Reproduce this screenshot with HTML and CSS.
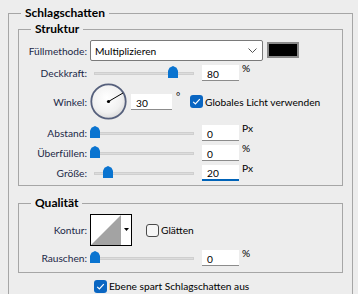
FILE: index.html
```html
<!DOCTYPE html>
<html lang="de">

<head>
    <meta charset="UTF-8">
    <title>Schlagschatten</title>
    <link rel="stylesheet" href="styles.css">
</head>

<body>
    <fieldset class="group outer">
        <legend>Schlagschatten</legend>

        <fieldset class="group inner">
            <legend>Struktur</legend>

            <div class="row row-mode">
                <label class="lbl">Füllmethode:</label>
                <div class="select">
                    <span>Multiplizieren</span>
                    <svg class="chevron" width="9" height="5" viewBox="0 0 9 5">
                        <path d="M0.5 0.5 L4.5 4.5 L8.5 0.5" fill="none" stroke="#555" stroke-width="1"/>
                    </svg>
                </div>
                <div class="swatch"></div>
            </div>

            <div class="row row-opacity">
                <label class="lbl">Deckkraft:</label>
                <div class="slider"><div class="track"></div><div class="thumb" style="left:78px"></div></div>
                <div class="num">80</div>
                <span class="unit">%</span>
            </div>

            <div class="row row-angle">
                <label class="lbl">Winkel:</label>
                <svg class="dial" width="37" height="37" viewBox="0 0 37 37">
                    <defs>
                        <radialGradient id="dialFill" cx="45%" cy="40%" r="60%">
                            <stop offset="0" stop-color="#ffffff"/>
                            <stop offset="0.7" stop-color="#f1f1f1"/>
                            <stop offset="1" stop-color="#dcdcdc"/>
                        </radialGradient>
                    </defs>
                    <circle cx="18.5" cy="18.5" r="17.2" fill="url(#dialFill)" stroke="#56607c" stroke-width="1.8"/>
                    <line x1="18.5" y1="18.5" x2="33" y2="10" stroke="#000" stroke-width="1"/>
                    <circle cx="18.5" cy="18.5" r="1.6" fill="#000"/>
                </svg>
                <div class="num num-angle">30</div>
                <span class="deg">°</span>
                <span class="check on">
                    <svg width="13" height="13" viewBox="0 0 13 13"><path d="M3.2 6.8 L5.4 9 L9.8 4.2" fill="none" stroke="#fff" stroke-width="1.2"/></svg>
                </span>
                <span class="check-text">Globales Licht verwenden</span>
            </div>

            <div class="row row-dist">
                <label class="lbl">Abstand:</label>
                <div class="slider"><div class="track"></div><div class="thumb" style="left:0px"></div></div>
                <div class="num">0</div>
                <span class="unit">Px</span>
            </div>

            <div class="row row-spread">
                <label class="lbl">Überfüllen:</label>
                <div class="slider"><div class="track"></div><div class="thumb" style="left:0px"></div></div>
                <div class="num">0</div>
                <span class="unit">%</span>
            </div>

            <div class="row row-size">
                <label class="lbl">Größe:</label>
                <div class="slider"><div class="track"></div><div class="thumb" style="left:13px"></div></div>
                <div class="num focus">20</div>
                <span class="unit">Px</span>
            </div>
        </fieldset>

        <fieldset class="group inner quality">
            <legend>Qualität</legend>

            <div class="row row-contour">
                <label class="lbl">Kontur:</label>
                <div class="contour">
                    <svg width="40" height="30" viewBox="0 0 40 30">
                        <rect x="0" y="0" width="40" height="30" fill="#fff"/>
                        <polygon points="0,30 30,0 30,30" fill="#a3a3a3"/>
                        <polygon points="33,13 38,13 35.5,16" fill="#000"/>
                    </svg>
                </div>
                <span class="check off"></span>
                <span class="check-text">Glätten</span>
            </div>

            <div class="row row-noise">
                <label class="lbl">Rauschen:</label>
                <div class="slider"><div class="track"></div><div class="thumb" style="left:0px"></div></div>
                <div class="num">0</div>
                <span class="unit">%</span>
            </div>
        </fieldset>

        <div class="row row-knockout">
            <span class="check on">
                <svg width="13" height="13" viewBox="0 0 13 13"><path d="M3.2 6.8 L5.4 9 L9.8 4.2" fill="none" stroke="#fff" stroke-width="1.2"/></svg>
            </span>
            <span class="check-text">Ebene spart Schlagschatten aus</span>
        </div>
    </fieldset>
</body>

</html>
```

FILE: styles.css
```css
* {
    box-sizing: border-box;
}

html,
body {
    height: 100%;
}

body {
    margin: 0;
    overflow: hidden;
    background: #ededed;
    font-family: Lato, "Segoe UI", sans-serif;
    font-size: 10.2px;
    color: #000;
}

/* group boxes */

.group {
    margin: 0;
    border: 1px solid #a6a6a6;
    min-width: 0;
}

.group legend {
    padding: 0 4px;
    height: 16px;
    line-height: 16px;
    font-weight: bold;
    font-size: 12px;
    color: #000;
}

.outer {
    margin: 5px 0 0 8px;
    width: 345px;
    padding: 0 9px 40px 9px;
}

.outer > legend {
    margin-left: 3px;
}

.inner {
    width: 325px;
    padding: 3px 0 4px 0;
}

.inner > legend {
    margin-left: 12px;
}

.quality {
    margin-top: 9px;
    padding-bottom: 6px;
}

/* rows */

.row {
    display: flex;
    align-items: center;
}

.row-mode {
    height: 21px;
}

.row-opacity {
    margin-top: 4px;
    height: 16px;
}

.row-angle {
    margin-top: 2px;
    height: 37px;
}

.row-dist {
    margin-top: 5px;
    height: 16px;
}

.row-spread,
.row-size {
    margin-top: 4px;
    height: 16px;
}

.row-contour {
    height: 32px;
}

.row-noise {
    margin-top: 4px;
    height: 16px;
}

.row-knockout {
    margin: 6px 0 0 76px;
    height: 14px;
}

.lbl {
    width: 68px;
    margin-right: 3px;
    text-align: right;
    color: #1b2847;
    white-space: nowrap;
}

/* controls */

.select {
    width: 173px;
    height: 21px;
    display: flex;
    align-items: center;
    justify-content: space-between;
    padding: 0 5px 0 4px;
    background: #fff;
    border: 1px solid #7a7a7a;
    border-radius: 2px;
}

.chevron {
    display: block;
}

.swatch {
    width: 32px;
    height: 16px;
    margin: 2px 0 0 4px;
    align-self: flex-start;
    background: #000;
    border: 2px solid #8a8a8a;
}

.slider {
    position: relative;
    width: 108px;
    height: 16px;
    margin-right: 4px;
}

.track {
    position: absolute;
    left: 4px;
    top: 7px;
    width: 100px;
    height: 3px;
    background: #dcdcdc;
    border: 1px solid #cfcfcf;
}

.thumb {
    position: absolute;
    top: 1px;
    width: 10px;
    height: 12px;
    background: #0a74d0;
    clip-path: polygon(50% 0, 85% 15%, 100% 40%, 100% 100%, 0 100%, 0 40%, 15% 15%);
}

.num {
    width: 37px;
    height: 16px;
    padding: 2px 0 0 5px;
    line-height: 14px;
    background: #fff;
    border-bottom: 1px solid #8c8c8c;
}

.num.focus {
    border-bottom: 2px solid #0063b8;
    line-height: 13px;
}

.unit {
    align-self: flex-start;
    margin: -3px 0 0 3px;
}

.dial {
    display: block;
}

.num-angle {
    width: 41px;
    margin-left: 4px;
}

.deg {
    width: 18px;
    padding-left: 4px;
    align-self: flex-start;
    margin-top: 7px;
}

.check {
    width: 13px;
    height: 13px;
    border-radius: 3px;
    flex: none;
}

.check svg {
    display: block;
}

.check.on {
    background: #0a66c2;
}

.check.off {
    margin-left: 14px;
    background: #f6f6f6;
    border: 1px solid #4a4a4a;
}

.check-text {
    margin-left: 2px;
}

.contour {
    width: 42px;
    height: 32px;
    border: 1px solid #000;
    background: #fff;
}

.contour svg {
    display: block;
}
```
